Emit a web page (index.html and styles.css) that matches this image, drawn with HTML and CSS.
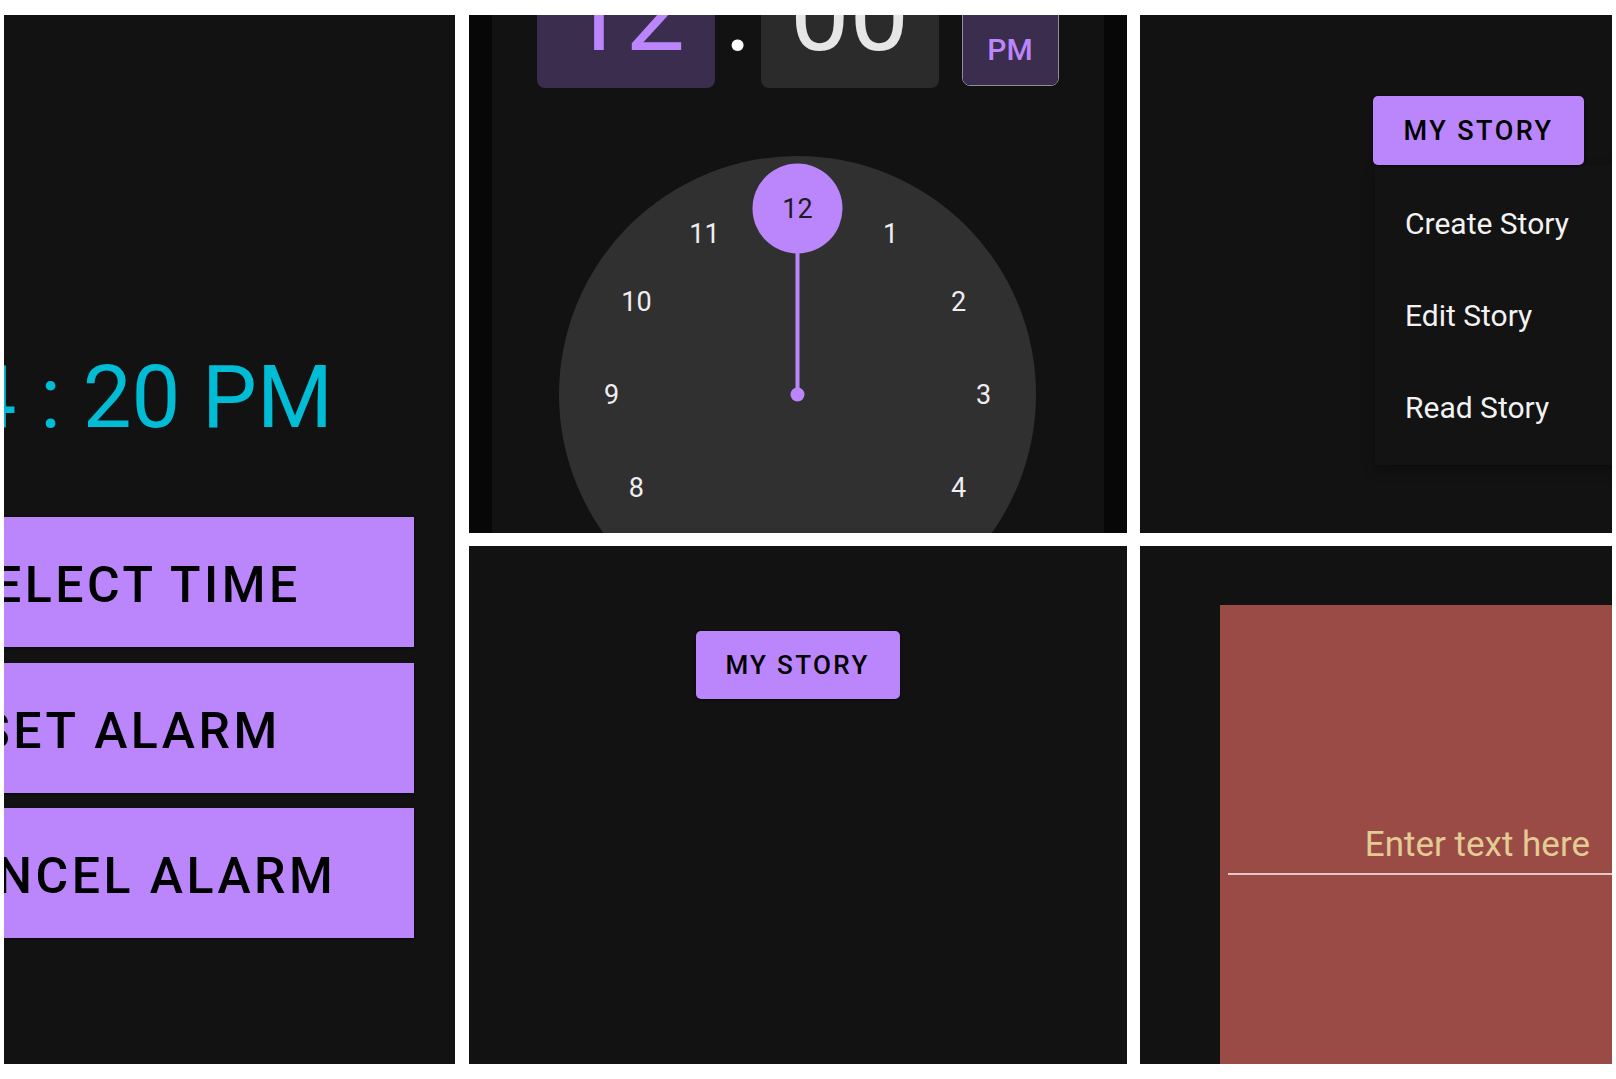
FILE: index.html
```html
<!DOCTYPE html>
<html lang="en">
<head>
<meta charset="utf-8">
<title>Alarm, time picker and story screens</title>
<link rel="stylesheet" href="styles.css">
</head>
<body>
<main class="collage">
  <section class="panel panel-alarm">
    <p class="alarm-time"><span class="alarm-hour">4</span> : 20 PM</p>
    <div class="alarm-actions">
      <button class="alarm-btn">SELECT TIME</button>
      <button class="alarm-btn">SET ALARM</button>
      <button class="alarm-btn">CANCEL ALARM</button>
    </div>
  </section>

  <section class="panel panel-clock">
    <div class="clock-screen">
      <div class="time-header">
        <div class="time-box time-box-active">12</div>
        <div class="time-sep">:</div>
        <div class="time-box">00</div>
        <div class="ampm">
          <span class="ampm-seg">AM</span>
          <span class="ampm-seg ampm-seg-active">PM</span>
        </div>
      </div>
      <svg class="dial" viewBox="0 0 477 477" width="477" height="477">
        <circle cx="238.5" cy="238.5" r="238.5" class="dial-face"/>
        <line x1="238.5" y1="96" x2="238.5" y2="238.5" class="dial-hand"/>
        <circle cx="238.5" cy="238.5" r="7" class="dial-pin"/>
        <circle cx="238.5" cy="52.5" r="45" class="dial-pin"/>
        <text x="238.5" y="62.1" class="dial-num dial-num-sel">12</text>
        <text x="331.5" y="87" class="dial-num">1</text>
        <text x="399.6" y="155.1" class="dial-num">2</text>
        <text x="424.5" y="248.1" class="dial-num">3</text>
        <text x="399.6" y="341.1" class="dial-num">4</text>
        <text x="331.5" y="409.2" class="dial-num">5</text>
        <text x="238.5" y="434.1" class="dial-num">6</text>
        <text x="145.5" y="409.2" class="dial-num">7</text>
        <text x="77.4" y="341.1" class="dial-num">8</text>
        <text x="52.5" y="248.1" class="dial-num">9</text>
        <text x="77.4" y="155.1" class="dial-num">10</text>
        <text x="145.5" y="87" class="dial-num">11</text>
      </svg>
    </div>
  </section>

  <section class="panel panel-menu">
    <button class="story-btn story-btn-lg">MY STORY</button>
    <ul class="menu">
      <li class="menu-item">Create Story</li>
      <li class="menu-item">Edit Story</li>
      <li class="menu-item">Read Story</li>
    </ul>
  </section>

  <section class="panel panel-single">
    <button class="story-btn story-btn-sm">MY STORY</button>
  </section>

  <section class="panel panel-field">
    <div class="field-box">
      <div class="field">Enter text here</div>
    </div>
  </section>
</main>
</body>
</html>
```

FILE: styles.css
```css
* {
  box-sizing: border-box;
}

html,
body {
  margin: 0;
  padding: 0;
}

body {
  width: 1616px;
  height: 1079px;
  overflow: hidden;
  background: #ffffff;
  font-family: Roboto, "Liberation Sans", sans-serif;
}

.collage {
  display: grid;
  grid-template-columns: 451px 658px 472px;
  grid-template-rows: 518px 518px;
  column-gap: 13.5px;
  row-gap: 13px;
  padding: 15px 0 0 4px;
}

.panel {
  background: #121212;
  overflow: hidden;
}

/* ---------- Panel 1: alarm ---------- */
.panel-alarm {
  grid-row: 1 / 3;
  padding-top: 332px;
}

.alarm-time {
  margin: 0 0 0 -36.5px;
  font-size: 87px;
  line-height: 100px;
  color: #00bcd4;
  white-space: nowrap;
}

.alarm-hour {
  margin-right: 2px;
}

.alarm-actions {
  display: flex;
  flex-direction: column;
  gap: 15.5px;
  margin: 70px 0 0 -158px;
  width: 568px;
}

.alarm-btn {
  height: 130px;
  border: 0;
  padding: 6px 0 0;
  background: #bb86fc;
  color: #000000;
  font-family: Roboto, "Liberation Sans", sans-serif;
  font-weight: 500;
  font-size: 50px;
  line-height: 1;
  letter-spacing: 3.5px;
  white-space: nowrap;
  box-shadow: 0 1px 2px rgba(0, 0, 0, 0.6);
}

/* ---------- Panel 2: time picker ---------- */
.panel-clock {
  border-left: 23px solid #070707;
  border-right: 23px solid #070707;
}

.clock-screen {
  display: flex;
  flex-direction: column;
  align-items: center;
}

.time-header {
  display: flex;
  align-items: flex-start;
  margin-top: -75px;
}

.time-box {
  width: 178px;
  height: 148px;
  border-radius: 8px;
  background: #2b2b2b;
  color: #e6e6e6;
  font-size: 106px;
  line-height: 148px;
  text-align: center;
}

.time-box-active {
  background: #3b2d4d;
  color: #bb86fc;
}

.time-sep {
  width: 46px;
  text-align: center;
  font-size: 106px;
  line-height: 148px;
  color: #ffffff;
}

.ampm {
  display: flex;
  flex-direction: column;
  width: 97px;
  height: 146px;
  margin-left: 23px;
  border: 1.5px solid #938c9b;
  border-radius: 8px;
  overflow: hidden;
}

.ampm-seg {
  flex: 1;
  display: flex;
  align-items: center;
  justify-content: center;
  font-weight: 500;
  font-size: 30px;
  color: #cac4d0;
}

.ampm-seg + .ampm-seg {
  border-top: 1.5px solid #938c9b;
}

.ampm-seg-active {
  background: #3b2d4d;
  color: #bb86fc;
}

.dial {
  display: block;
  flex-shrink: 0;
  margin-top: 68px;
}

.dial-face {
  fill: #303030;
}

.dial-hand {
  stroke: #bb86fc;
  stroke-width: 4;
}

.dial-pin {
  fill: #bb86fc;
}

.dial-num {
  font-family: Roboto, "Liberation Sans", sans-serif;
  font-size: 27px;
  fill: #f0edf2;
  text-anchor: middle;
}

.dial-num-sel {
  fill: #1c1b1f;
}

/* ---------- Story buttons ---------- */
.story-btn {
  display: flex;
  align-items: center;
  justify-content: center;
  border: 0;
  padding: 0;
  border-radius: 5px;
  background: #bb86fc;
  color: #000000;
  font-family: Roboto, "Liberation Sans", sans-serif;
  font-weight: 500;
  letter-spacing: 0.09em;
  white-space: nowrap;
  box-shadow: 0 1px 3px rgba(0, 0, 0, 0.6);
}

.story-btn-lg {
  width: 211px;
  height: 69px;
  font-size: 27px;
}

.story-btn-sm {
  width: 204px;
  height: 68px;
  font-size: 26px;
}

/* ---------- Panel 3: popup menu ---------- */
.panel-menu {
  display: flex;
  flex-direction: column;
  padding-top: 81px;
}

.panel-menu .story-btn {
  position: relative;
  z-index: 1;
  align-self: flex-end;
  margin-right: 28px;
}

.menu {
  list-style: none;
  margin: 0 0 0 235px;
  width: 300px;
  padding: 12px 0;
  background: #131313;
  box-shadow: 0 5px 12px rgba(0, 0, 0, 0.3);
}

.menu-item {
  display: flex;
  align-items: center;
  height: 92px;
  padding-left: 30px;
  font-size: 30px;
  color: #f2f2f2;
}

/* ---------- Panel 4: single button ---------- */
.panel-single {
  display: flex;
  justify-content: center;
  align-items: flex-start;
  padding-top: 85px;
}

/* ---------- Panel 5: text field ---------- */
.panel-field {
  padding: 59px 0 0 80px;
}

.field-box {
  height: 100%;
  padding: 218px 0 0 8px;
  background: #9a4b45;
}

.field {
  padding: 0 22px 6px 0;
  border-bottom: 2px solid #e1c9c7;
  font-size: 35px;
  line-height: 44px;
  color: #e3cb94;
  text-align: right;
  white-space: nowrap;
}
```
